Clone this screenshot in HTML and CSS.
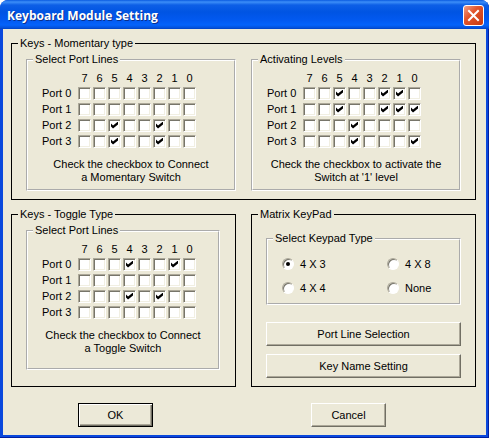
FILE: index.html
```html
<!DOCTYPE html>
<html lang="en">
<head>
    <meta charset="UTF-8">
    <meta name="viewport" content="width=device-width, initial-scale=1.0">
    <title>Keyboard Module Setting</title>
    <link rel="stylesheet" href="styles.css">
</head>

<body>
    <div class="window">
        <header class="titlebar">
            <h1>Keyboard Module Setting</h1>
            <button type="button" class="close" aria-label="Close">
                <svg width="13" height="13" viewBox="0 0 13 13">
                    <path d="M2 2 L11 11 M11 2 L2 11" stroke="#fff" stroke-width="2" stroke-linecap="square"/>
                </svg>
            </button>
        </header>

        <form class="content">
            <div class="groups">
                <fieldset class="group momentary">
                    <legend>Keys - Momentary type</legend>
                    <div class="pair">
                        <fieldset class="panel">
                            <legend>Select Port Lines</legend>
                            <table class="ports" id="momentary"></table>
                            <p>Check the checkbox to Connect<br>a Momentary Switch</p>
                        </fieldset>
                        <fieldset class="panel">
                            <legend>Activating Levels</legend>
                            <table class="ports" id="levels"></table>
                            <p>Check the checkbox to activate the<br>Switch at '1' level</p>
                        </fieldset>
                    </div>
                </fieldset>

                <fieldset class="group toggle">
                    <legend>Keys - Toggle Type</legend>
                    <fieldset class="panel">
                        <legend>Select Port Lines</legend>
                        <table class="ports" id="toggle"></table>
                        <p>Check the checkbox to Connect<br>a Toggle Switch</p>
                    </fieldset>
                </fieldset>

                <fieldset class="group matrix">
                    <legend>Matrix KeyPad</legend>
                    <fieldset class="panel">
                        <legend>Select Keypad Type</legend>
                        <div class="options">
                            <label><input type="radio" name="keypad" checked>4 X 3</label>
                            <label><input type="radio" name="keypad">4 X 8</label>
                            <label><input type="radio" name="keypad">4 X 4</label>
                            <label><input type="radio" name="keypad">None</label>
                        </div>
                    </fieldset>
                    <div class="actions">
                        <button type="button" class="btn">Port Line Selection</button>
                        <button type="button" class="btn">Key Name Setting</button>
                    </div>
                </fieldset>
            </div>

            <footer class="footer">
                <button type="button" class="btn default">OK</button>
                <button type="button" class="btn">Cancel</button>
            </footer>
        </form>
    </div>

    <script src="script.js"></script>
</body>
</html>
```
FILE: styles.css
```css
* {
    box-sizing: border-box;
}

body {
    margin: 0;
    background: #fff;
    color: #000;
    font-family: "Liberation Sans", Arial, sans-serif;
    font-size: 11px;
    line-height: 13px;
}

.window {
    display: flex;
    flex-direction: column;
    min-height: 100vh;
    background: #0a48dd;
    border-radius: 8px 8px 0 0;
    box-shadow: inset -1px -1px #001ea0;
    overflow: hidden;
}

/* Title bar */
.titlebar {
    display: flex;
    align-items: center;
    justify-content: space-between;
    height: 29px;
    padding: 2px 5px 0 7px;
    background: linear-gradient(#0a5be0 0, #3c8ef8 2px, #0d5fe6 5px, #0054e3 12px, #0259f0 20px, #0463fb 25px, #0450d8 28px, #0040c0 29px);
}

.titlebar h1 {
    margin: 0;
    color: #fff;
    font-family: "Open Sans", "Noto Sans", sans-serif;
    font-size: 12px;
    line-height: 18px;
    font-weight: bold;
    text-shadow: 1px 1px #0a2f8c;
}

.close {
    display: flex;
    align-items: center;
    justify-content: center;
    width: 21px;
    height: 21px;
    padding: 0;
    border: 1px solid #fff;
    border-radius: 3px;
    background: linear-gradient(135deg, #f0a088, #e2552c 40%, #c8390f);
}

.content {
    flex: 1;
    margin: 0 3px 3px;
    padding: 8px 10px 8px 8px;
    background: #ece9d8;
}

/* Group boxes */
.groups {
    display: grid;
    grid-template-columns: 1fr 1fr;
    gap: 8px 15px;
}

fieldset {
    min-width: 0;
    margin: 0;
}

legend {
    padding: 0 2px;
}

.group {
    border: 1px solid #000;
    padding: 3px 14px 8px;
}

.group > legend {
    margin-left: -8px;
}

.momentary {
    grid-column: 1 / -1;
}

.pair {
    display: grid;
    grid-template-columns: 1fr 1fr;
    gap: 15px;
}

.panel {
    border: 2px groove #fff;
    padding: 5px 14px;
}

.panel > legend {
    margin-left: -9px;
}

.panel p {
    margin: 9px 0 0;
    text-align: center;
    white-space: nowrap;
}

.toggle {
    padding-right: 15px;
    padding-bottom: 16px;
}

.toggle .panel {
    padding-bottom: 13px;
}

/* Port line grids */
.ports {
    border-collapse: collapse;
    table-layout: fixed;
    width: 155px;
}

.ports th,
.ports td {
    width: 15px;
    height: 16px;
    padding: 0;
    font-weight: normal;
    text-align: center;
    vertical-align: middle;
}

.ports thead th {
    height: 14px;
}

.ports th:first-child {
    width: 35px;
    text-align: left;
    white-space: nowrap;
}

.ports input {
    appearance: none;
    display: block;
    width: 13px;
    height: 13px;
    margin: 0 auto;
    border: 1px solid;
    border-color: #aca899 #fff #fff #aca899;
    background: #fff;
    box-shadow: inset 1px 1px #77756a, inset -1px -1px #f1efe2;
}

.ports input:checked::before {
    content: "";
    display: block;
    width: 7px;
    height: 7px;
    margin: 2px;
    background: #000;
    clip-path: polygon(0 29%, 29% 58%, 100% 0, 100% 43%, 29% 100%, 0 71%);
}

/* Keypad type */
.matrix {
    padding-top: 11px;
}

.matrix .panel {
    padding: 7px 14px 3px;
}

.options {
    display: grid;
    grid-template-columns: 105px 1fr;
    grid-auto-rows: 24px;
    align-items: center;
}

.options label {
    display: flex;
    align-items: center;
    gap: 6px;
    white-space: nowrap;
}

.options input {
    appearance: none;
    display: flex;
    align-items: center;
    justify-content: center;
    width: 12px;
    height: 12px;
    margin: 0;
    border: 1px solid;
    border-color: #aca899 #fff #fff #aca899;
    border-radius: 50%;
    background: #fff;
    box-shadow: inset 1px 1px #77756a;
}

.options input:checked::before {
    content: "";
    width: 4px;
    height: 4px;
    border-radius: 50%;
    background: #000;
}

/* Buttons */
.btn {
    height: 24px;
    padding: 0 4px;
    border: 1px solid;
    border-color: #fff #716f64 #716f64 #fff;
    background: #ece9d8;
    box-shadow: inset -1px -1px #aca899;
    color: #000;
    font: inherit;
}

.btn.default {
    border-color: #000;
    box-shadow: inset 1px 1px #fff, inset -1px -1px #716f64, inset -2px -2px #aca899;
}

.actions {
    display: grid;
    gap: 8px;
    margin-top: 17px;
}

.footer {
    display: flex;
    justify-content: space-between;
    padding: 16px 90px 0 67px;
}

.footer .btn {
    width: 75px;
}
```
FILE: script.js
```js
// checked port lines, one row per port
const grids = {
    momentary: [[], [], [5, 2], [5, 2]],
    levels: [[5, 2, 1], [5, 2, 1, 0], [4], [4, 0]],
    toggle: [[4, 1], [], [4, 2], []]
};
const lines = [7, 6, 5, 4, 3, 2, 1, 0];

function buildGrid(id, ports) {
    const head = lines.map(line => `<th scope="col">${line}</th>`).join('');
    const rows = ports.map((checked, port) => {
        const cells = lines.map(line => {
            const state = checked.includes(line) ? 'checked' : '';
            return `<td><input type="checkbox" aria-label="Port ${port} line ${line}" ${state}></td>`;
        }).join('');
        return `<tr><th scope="row">Port ${port}</th>${cells}</tr>`;
    }).join('');

    document.getElementById(id).innerHTML =
        `<thead><tr><th></th>${head}</tr></thead><tbody>${rows}</tbody>`;
}

Object.keys(grids).forEach(id => buildGrid(id, grids[id]));
```
